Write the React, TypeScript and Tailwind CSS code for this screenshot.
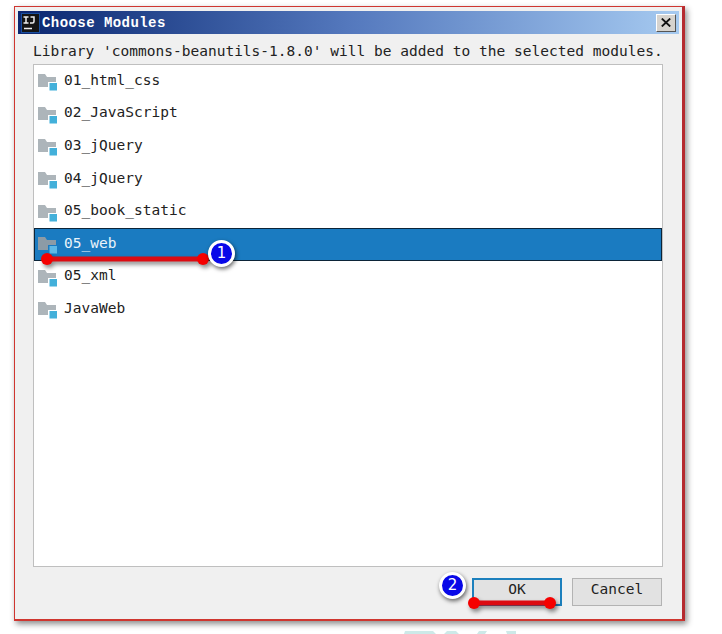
import React from "react";

const modules = [
  "01_html_css",
  "02_JavaScript",
  "03_jQuery",
  "04_jQuery",
  "05_book_static",
  "05_web",
  "05_xml",
  "JavaWeb",
];

function ModuleIcon({ selected }: { selected: boolean }) {
  return (
    <svg width="20" height="18" viewBox="0 0 20 18" className="mt-[2px] shrink-0">
      <path d="M0 1h7l2 3h9v5h-8v5H0z" fill={selected ? "#8c9ba6" : "#adb5ba"} />
      <rect x="11.5" y="10" width="7.5" height="7.5" fill={selected ? "#5fb9e6" : "#43b0da"} />
    </svg>
  );
}

function ModuleRow({ name, selected }: { name: string; selected: boolean }) {
  return (
    <li
      className={
        selected
          ? "flex h-[32.6px] items-center border border-[#0c2438] bg-[#1a7bc1] pl-[3px] text-[#e9f3fa]"
          : "flex h-[32.6px] items-center pl-1 text-[#222]"
      }
    >
      <ModuleIcon selected={selected} />
      <span className="ml-[6px] -mt-[3px]">{name}</span>
    </li>
  );
}

function Underline({ width, className }: { width: number; className: string }) {
  return (
    <svg
      width={width}
      height="18"
      className={"absolute overflow-visible drop-shadow-[2px_3px_2px_rgba(0,0,0,0.45)] " + className}
    >
      <path d={`M6 6H${width - 6}`} stroke="#dc0b12" strokeWidth="5" />
      <circle cx="6" cy="6" r="6" fill="#f50000" />
      <circle cx={width - 6} cy="6" r="6" fill="#f50000" />
    </svg>
  );
}

function Badge({ label, className }: { label: string; className: string }) {
  return (
    <span
      className={
        "absolute flex size-[27px] items-center justify-center rounded-full border-[3px] border-white bg-[#0808e8] font-['DejaVu_Sans',sans-serif] text-[15px] leading-none text-white shadow-[1px_2px_4px_rgba(0,0,0,0.6)] " +
        className
      }
    >
      {label}
    </span>
  );
}

export default function App() {
  return (
    <div className="relative h-[634px] w-[722px] overflow-hidden bg-white pt-[6px] pl-[14px] font-['DejaVu_Sans_Mono',monospace] text-[14.5px] leading-5 tracking-[0.015px] text-[#222]">
      <div className="flex h-[615px] w-[671px] flex-col border border-r-[3px] border-b-2 border-[#cf3630] border-r-[#b52b30] bg-[#f0f0f0] px-[3px] pt-1 shadow-[2px_3px_6px_rgba(0,0,0,0.45)]">
        <header className="flex h-[23px] shrink-0 items-center bg-linear-to-r from-[#0b2670] via-[#5478bd] to-[#a6caf0] pr-[3px] pl-[3px]">
          <svg width="19" height="20" viewBox="0 0 19 20" className="shrink-0">
            <rect width="19" height="20" fill="#1a4fa0" />
            <rect x="1" y="1" width="17" height="18" fill="#141414" />
            <path d="M2.5 4h5M5 4v6M2.5 10h5M9.5 4h3.5v4.500q0 1.500-1.500 1.500H9M3 15.500h8" fill="none" stroke="#eee" strokeWidth="1.5" />
          </svg>
          <h1 className="mt-px ml-[2px] font-['Liberation_Mono',monospace] text-[14px] font-bold tracking-[0.44px] text-white">
            Choose Modules
          </h1>
          <button className="ml-auto flex h-[18px] w-5 items-center justify-center border border-t-white border-r-[#555] border-b-[#555] border-l-white bg-[#d6d3ce]" aria-label="Close">
            <svg width="10" height="9" viewBox="0 0 10 9">
              <path d="M.8.5l8.4 8M9.2.5L.8 8.5" stroke="#111" strokeWidth="1.8" />
            </svg>
          </button>
        </header>
        <main className="px-[15px]">
          <p className="mt-[7px] whitespace-nowrap">
            Library 'commons-beanutils-1.8.0' will be added to the selected modules.
          </p>
          <ul className="mt-[3px] h-[503px] w-[630px] border border-[#bfbfbf] bg-white">
            {modules.map((name) => (
              <ModuleRow key={name} name={name} selected={name === "05_web"} />
            ))}
          </ul>
          <footer className="mt-[11px] flex w-[629px] justify-end gap-[10px]">
            <button className="h-7 w-[90px] border-2 border-[#1c80bd] bg-[#e2e2e2] pb-[6px] leading-[17px]">OK</button>
            <button className="h-7 w-[90px] border border-[#b3b3b3] bg-[#e2e2e2] pb-[6px] leading-[19px]">Cancel</button>
          </footer>
        </main>
      </div>
      <Underline width={168} className="top-[253px] left-[41px]" />
      <Badge label="1" className="top-[240px] left-[208px]" />
      <Underline width={88} className="top-[597px] left-[468px]" />
      <Badge label="2" className="top-[572px] left-[439px]" />
      <svg width="114" height="3" className="absolute bottom-0 left-[404px]">
        <path d="M1 0h28l3 3H0zM43 0h9l3 3H40zM75 0h8l-2 3h-8zM102 0h10v3h-9z" fill="#cde9e8" />
      </svg>
    </div>
  );
}
